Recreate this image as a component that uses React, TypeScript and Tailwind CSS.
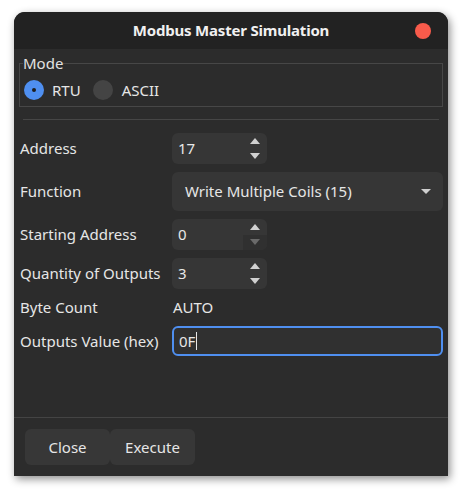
import React from 'react'

const font = { fontFamily: '"Noto Sans", "Open Sans", sans-serif' }

function SpinArrows({ downDisabled = false }: { downDisabled?: boolean }) {
  return (
    <div className="flex flex-col w-[24px] self-stretch">
      <div className="flex-1 flex items-center justify-center">
        <svg width="10" height="6" viewBox="0 0 10 6">
          <path d="M0 6 L5 0 L10 6 Z" fill="#d0d0d0" />
        </svg>
      </div>
      <div className={`flex-1 flex items-center justify-center ${downDisabled ? 'bg-[#303030] rounded-br-[6px]' : ''}`}>
        <svg width="10" height="6" viewBox="0 0 10 6">
          <path d="M0 0 L10 0 L5 6 Z" fill={downDisabled ? '#6a6a6a' : '#d0d0d0'} />
        </svg>
      </div>
    </div>
  )
}

function SpinBox({ value, downDisabled }: { value: string; downDisabled?: boolean }) {
  return (
    <div className="w-[95px] h-[31px] bg-[#363636] rounded-[6px] flex items-center pl-[6px]">
      <span className="flex-1 text-[15px] text-[#e8e8e8]">{value}</span>
      <SpinArrows downDisabled={downDisabled} />
    </div>
  )
}

export default function App() {
  return (
    <div className="w-[466px] h-[494px] bg-white pt-[12px] pl-[14px]" style={font}>
      <div className="w-[434px] h-[464px] rounded-t-[11px] bg-[#2c2c2c] flex flex-col shadow-[2px_3px_8px_rgba(0,0,0,0.45)] overflow-hidden text-[#e6e6e6]">
        {/* Title bar */}
        <div className="h-[37px] bg-[#222222] flex items-center relative">
          <div className="flex-1 text-center text-[15px] font-bold text-[#f0f0f0] tracking-[-0.2px]">
            Modbus Master Simulation
          </div>
          <div className="absolute right-[17px] top-[11px] w-[16px] h-[16px] rounded-full bg-[#f85b4b]" />
        </div>

        {/* Mode */}
        <fieldset className="mx-[5px] mt-[5px] border border-[#474747] px-[4px] pb-[6px]">
          <legend className="text-[15px] leading-[18px] text-[#e2e2e2] px-0 -ml-[1px]">Mode</legend>
          <div className="flex items-center mt-[8px] h-[20px] text-[15px]">
            <div className="w-[20px] h-[20px] rounded-full bg-[#4f8ff0] flex items-center justify-center">
              <div className="w-[4px] h-[4px] rounded-full bg-[#1e1e1e]" />
            </div>
            <span className="ml-[8px]">RTU</span>
            <div className="ml-[12px] w-[20px] h-[20px] rounded-full bg-[#444444]" />
            <span className="ml-[9px]">ASCII</span>
          </div>
        </fieldset>

        <div className="mx-[9px] mt-[12px] h-px bg-[#464646]" />

        {/* Form */}
        <div className="px-[6px] pt-[13px] grid grid-cols-[152px_1fr] gap-y-[8px] items-center text-[15px]">
          <span>Address</span>
          <SpinBox value="17" />

          <span>Function</span>
          <div className="h-[39px] mr-[-1px] bg-[#363636] rounded-[6px] flex items-center pl-[13px] pr-[12px]">
            <span className="flex-1">Write Multiple Coils (15)</span>
            <svg width="10" height="5" viewBox="0 0 10 5">
              <path d="M0 0 L10 0 L5 5 Z" fill="#cfcfcf" />
            </svg>
          </div>

          <span>Starting Address</span>
          <SpinBox value="0" downDisabled />

          <span>Quantity of Outputs</span>
          <SpinBox value="3" />

          <span className="h-[21px] flex items-center">Byte Count</span>
          <span className="h-[21px] flex items-center pl-[1px]">AUTO</span>

          <span>Outputs Value (hex)</span>
          <div className="h-[30px] mr-[-1px] border-2 border-[#4f8ff0] rounded-[6px] bg-[#303030] flex items-center pl-[5px]">
            <span>0F</span>
            <span className="w-px h-[18px] bg-[#e6e6e6] ml-px" />
          </div>
        </div>

        <div className="flex-1" />

        {/* Footer */}
        <div className="border-t border-[#444444] px-[11px] pt-[11px] pb-[11px] flex">
          <button className="w-[85px] h-[36px] rounded-[6px] bg-[#373737] text-[15px] text-[#e6e6e6]">Close</button>
          <button className="w-[85px] h-[36px] rounded-[6px] bg-[#373737] text-[15px] text-[#e6e6e6]">Execute</button>
        </div>
      </div>
    </div>
  )
}
